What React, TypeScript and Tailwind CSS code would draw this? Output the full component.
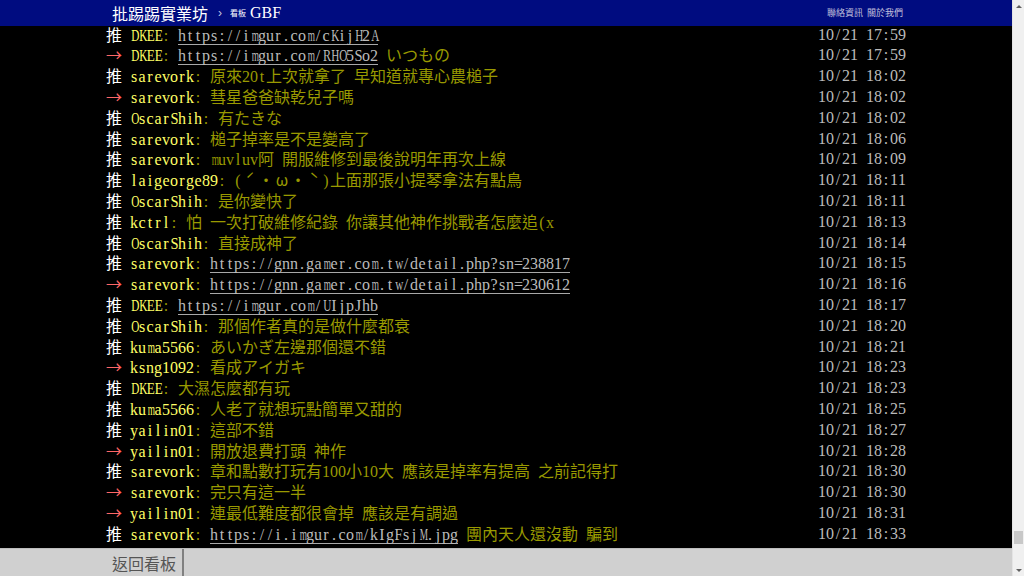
import React from 'react';

type Push = { tag: '推' | '→'; user: string; text: string; time: string };

const pushes: Push[] = [
  { tag: '推', user: 'DKEE', text: 'https://imgur.com/cKijH2A', time: '10/21 17:59' },
  { tag: '→', user: 'DKEE', text: 'https://imgur.com/RHO5So2 いつもの', time: '10/21 17:59' },
  { tag: '推', user: 'sarevork', text: '原來20t上次就拿了 早知道就專心農槌子', time: '10/21 18:02' },
  { tag: '→', user: 'sarevork', text: '彗星爸爸缺乾兒子嗎', time: '10/21 18:02' },
  { tag: '推', user: 'OscarShih', text: '有たきな', time: '10/21 18:02' },
  { tag: '推', user: 'sarevork', text: '槌子掉率是不是變高了', time: '10/21 18:06' },
  { tag: '推', user: 'sarevork', text: 'muvluv阿 開服維修到最後說明年再次上線', time: '10/21 18:09' },
  { tag: '推', user: 'laigeorge89', text: '(ˊ・ω・ˋ)上面那張小提琴拿法有點鳥', time: '10/21 18:11' },
  { tag: '推', user: 'OscarShih', text: '是你變快了', time: '10/21 18:11' },
  { tag: '推', user: 'kctrl', text: '怕 一次打破維修紀錄 你讓其他神作挑戰者怎麼追(x', time: '10/21 18:13' },
  { tag: '推', user: 'OscarShih', text: '直接成神了', time: '10/21 18:14' },
  { tag: '推', user: 'sarevork', text: 'https://gnn.gamer.com.tw/detail.php?sn=238817', time: '10/21 18:15' },
  { tag: '→', user: 'sarevork', text: 'https://gnn.gamer.com.tw/detail.php?sn=230612', time: '10/21 18:16' },
  { tag: '推', user: 'DKEE', text: 'https://imgur.com/UIjpJhb', time: '10/21 18:17' },
  { tag: '推', user: 'OscarShih', text: '那個作者真的是做什麼都衰', time: '10/21 18:20' },
  { tag: '推', user: 'kuma5566', text: 'あいかぎ左邊那個還不錯', time: '10/21 18:21' },
  { tag: '→', user: 'ksng1092', text: '看成アイガキ', time: '10/21 18:23' },
  { tag: '推', user: 'DKEE', text: '大濕怎麼都有玩', time: '10/21 18:23' },
  { tag: '推', user: 'kuma5566', text: '人老了就想玩點簡單又甜的', time: '10/21 18:25' },
  { tag: '推', user: 'yailin01', text: '這部不錯', time: '10/21 18:27' },
  { tag: '→', user: 'yailin01', text: '開放退費打頭 神作', time: '10/21 18:28' },
  { tag: '推', user: 'sarevork', text: '章和點數打玩有100小10大 應該是掉率有提高 之前記得打', time: '10/21 18:30' },
  { tag: '→', user: 'sarevork', text: '完只有這一半', time: '10/21 18:30' },
  { tag: '→', user: 'yailin01', text: '連最低難度都很會掉 應該是有調過', time: '10/21 18:31' },
  { tag: '推', user: 'sarevork', text: 'https://i.imgur.com/kIgFsjM.jpg 團內天人還沒動 騙到', time: '10/21 18:33' },
];

// Times glyphs wider than a half cell get squeezed into 8px (terminal-style half width)
const squeeze = (ch: string) => {
  if ('MWm'.includes(ch)) return 'scale-x-[0.58]';
  if ('ADGHKNOQUVXYw'.includes(ch)) return 'scale-x-[0.7]';
  if ('BCR'.includes(ch)) return 'scale-x-[0.76]';
  if ('ELTZ'.includes(ch)) return 'scale-x-[0.82]';
  if ('FPS'.includes(ch)) return 'scale-x-[0.9]';
  return '';
};

// half-width text: one 8px cell per char
const Half = ({ children, className = '' }: { children: string; className?: string }) => (
  <span className={className}>
    {Array.from(children).map((ch, i) => (
      <span
        key={i}
        className={`inline-block w-[8px] text-center font-['Liberation_Serif',serif] text-[16px] ${squeeze(ch)}`}
      >
        {ch === ' ' ? '\u00a0' : ch}
      </span>
    ))}
  </span>
);

// full-width chars: one 16px cell each
const Full = ({ children, className = '' }: { children: string; className?: string }) => (
  <>
    {Array.from(children).map((ch, i) => (
      <span
        key={i}
        className={`inline-block w-[16px] text-center font-['Noto_Sans_CJK_TC','Noto_Sans_CJK_JP',sans-serif] text-[16px] ${className}`}
      >
        {ch}
      </span>
    ))}
  </>
);

function Mixed({ text, className }: { text: string; className: string }) {
  const parts = text.match(/[\x00-\x7f]+|[^\x00-\x7f]+/g) || [];
  return (
    <>
      {parts.map((p, i) =>
        /^[\x00-\x7f]/.test(p) ? (
          <Half key={i} className={className}>{p}</Half>
        ) : (
          <Full key={i} className={className}>{p}</Full>
        )
      )}
    </>
  );
}

function Content({ text }: { text: string }) {
  // urls get the link style (a bottom border, so squeezed glyphs don't break it)
  const parts = text.split(/(https?:\/\/\S+)/);
  return (
    <>
      {parts.map((p, i) =>
        p.startsWith('http') ? (
          <span key={i} className="inline-block leading-[16px] border-b border-[#a8a8a8]">
            <Half className="text-[#bbbbbb]">{p}</Half>
          </span>
        ) : p ? (
          <Mixed key={i} text={p} className="text-[#999900]" />
        ) : null
      )}
    </>
  );
}

function PushRow({ p }: { p: Push }) {
  return (
    <div className="flex justify-between whitespace-pre leading-[20.8px] h-[20.8px]">
      <div>
        <Full className={p.tag === '推' ? 'text-white' : 'text-[#ff6666]'}>{p.tag}</Full>
        <Half> </Half>
        <Half className="text-[#ffff66]">{p.user}</Half>
        <Half className="text-[#999900]">{': '}</Half>
        <Content text={p.text} />
      </div>
      <Half className="text-[#bbbbbb]">{p.time}</Half>
    </div>
  );
}

function Scrollbar() {
  return (
    <div className="w-[12px] bg-[#f0f0f0] border-l border-[#e4e4e4] flex flex-col items-center">
      <div className="h-[12px] flex items-center justify-center">
        <div className="w-0 h-0 border-l-[3px] border-r-[3px] border-b-[3px] border-l-transparent border-r-transparent border-b-[#606060]" />
      </div>
      <div className="flex-1 w-full flex flex-col justify-end px-[1px] pb-[20px]">
        <div className="h-[13px] w-full bg-[#c8c8c8]" />
      </div>
      <div className="h-[12px] flex items-center justify-center">
        <div className="w-0 h-0 border-l-[3px] border-r-[3px] border-t-[3px] border-l-transparent border-r-transparent border-t-[#606060]" />
      </div>
    </div>
  );
}

export default function App() {
  return (
    <div className="w-[1024px] h-[576px] flex overflow-hidden bg-black">
      <div className="flex-1 flex flex-col">
        <header className="h-[26px] bg-[#000c80] shrink-0">
          <div className="w-[800px] mx-auto h-full flex items-center justify-between pl-[6px] pr-[3px]">
            <div className="flex items-center">
              <span className="font-['Noto_Sans_CJK_TC',sans-serif] text-[16px] leading-none text-white">批踢踢實業坊</span>
              <span className="ml-[10px] font-['Liberation_Sans',sans-serif] text-[12px] text-[#c8c8e0]">›</span>
              <span className="ml-[8px] font-['Noto_Sans_CJK_TC',sans-serif] text-[8px] text-white">看板</span>
              <span className="ml-[4px] font-['Liberation_Serif',serif] text-[16px] leading-none text-white">GBF</span>
            </div>
            <div className="flex items-center gap-[4px] font-['Noto_Sans_CJK_TC',sans-serif] text-[9px] text-[#c0c0dc]">
              <span>聯絡資訊</span>
              <span>關於我們</span>
            </div>
          </div>
        </header>
        <main className="flex-1 overflow-hidden">
          <div className="w-[800px] mx-auto mt-[-2.4px]">
            {pushes.map((p, i) => (
              <PushRow key={i} p={p} />
            ))}
          </div>
        </main>
        <footer className="h-[28px] shrink-0 bg-[#d0d0d0] border-t border-[#bdbdbd]">
          <div className="w-[800px] mx-auto h-full flex items-stretch pl-[6px]">
            <span className="flex items-center pr-[6px] font-['Noto_Sans_CJK_TC',sans-serif] text-[16px] text-[#555555]">返回看板</span>
            <div className="w-[2px] bg-[#808080]" />
          </div>
        </footer>
      </div>
      <Scrollbar />
    </div>
  );
}
